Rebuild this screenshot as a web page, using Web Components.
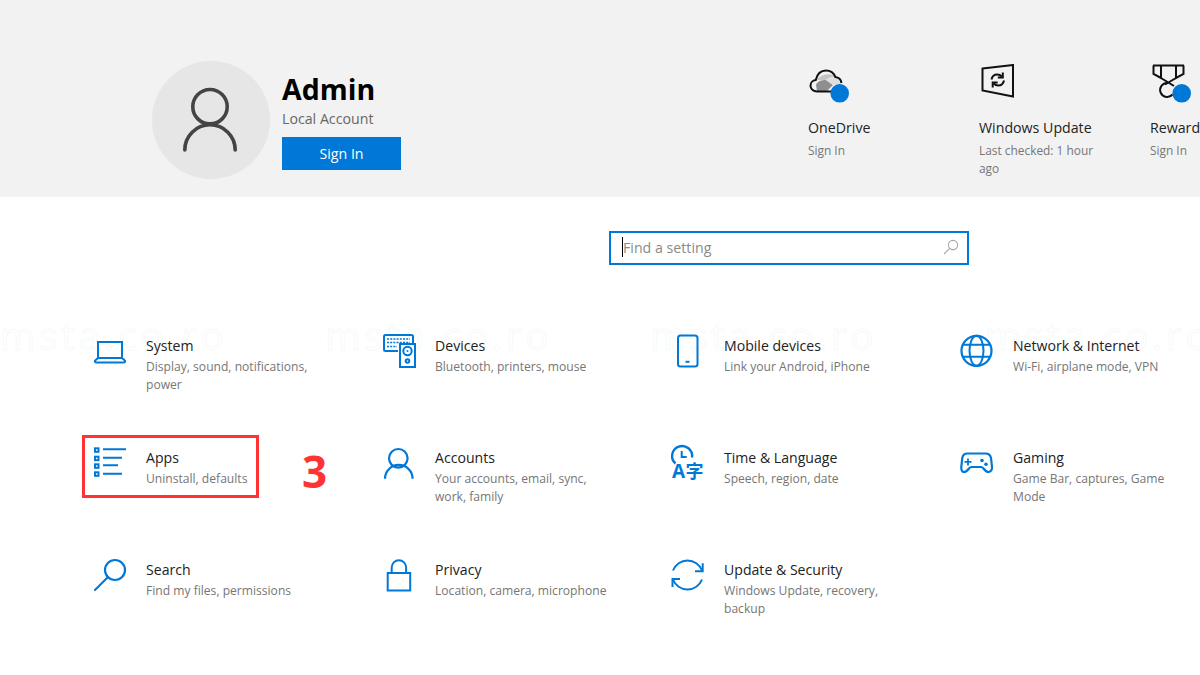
<!DOCTYPE html>
<html lang="en">
<head>
<meta charset="utf-8">
<title>Settings</title>
<style>
  html, body { margin: 0; padding: 0; background: #fff; }
  body { width: 1200px; height: 675px; overflow: hidden; font-family: "Open Sans", "Noto Sans", sans-serif; }
</style>
</head>
<body>
<settings-home>
  <account-header slot="header">
    <user-card name="Admin" kind="Local Account" action="Sign In"></user-card>
    <status-item title="OneDrive" detail="Sign In" icon="onedrive"></status-item>
    <status-item title="Windows Update" detail="Last checked: 1 hour ago" icon="update"></status-item>
    <status-item title="Rewards" detail="Sign In" icon="rewards"></status-item>
  </account-header>
  <search-box slot="search" placeholder="Find a setting"></search-box>
  <setting-tile icon="system" title="System" detail="Display, sound, notifications, power"></setting-tile>
  <setting-tile icon="devices" title="Devices" detail="Bluetooth, printers, mouse"></setting-tile>
  <setting-tile icon="mobile" title="Mobile devices" detail="Link your Android, iPhone"></setting-tile>
  <setting-tile icon="network" title="Network &amp; Internet" detail="Wi-Fi, airplane mode, VPN"></setting-tile>
  <setting-tile icon="apps" title="Apps" detail="Uninstall, defaults" marked></setting-tile>
  <setting-tile icon="accounts" title="Accounts" detail="Your accounts, email, sync, work, family"></setting-tile>
  <setting-tile icon="time" title="Time &amp; Language" detail="Speech, region, date"></setting-tile>
  <setting-tile icon="gaming" title="Gaming" detail="Game Bar, captures, Game Mode"></setting-tile>
  <setting-tile icon="search" title="Search" detail="Find my files, permissions"></setting-tile>
  <setting-tile icon="privacy" title="Privacy" detail="Location, camera, microphone"></setting-tile>
  <setting-tile icon="security" title="Update &amp; Security" detail="Windows Update, recovery, backup"></setting-tile>
</settings-home>

<script>
const ICONS = {
  onedrive: `
    <path d="M9 16c3-6 15-8 18-3-5 0-7 1-9 3z" fill="#c4c4c4"/>
    <path d="M8 21c1-4 6-5 10-5l7 5-6 6H9z" fill="#8f8f8f"/>
    <path d="M18 16c3-2 8-3 11-2l4 6-8 1z" fill="#dedede"/>
    <path d="M24 27.500H9c-3.800 0-6.500-2.600-6.500-5.800 0-3 2.200-5.300 5.200-5.600C9.200 9.800 13 6.500 18 6.500c4.400 0 7.800 2.500 9.300 6.500 3.200.3 5.700 2.900 6.200 6" fill="none" stroke="#111" stroke-width="2"/>
    <circle cx="31.700" cy="29.300" r="9.300" fill="#0078d7"/>`,
  update: `
    <path d="M3.500 4.600 34 1v31.500L3.500 26.400z" fill="none" stroke="#111" stroke-width="2"/>
    <path d="M12.500 15.500c.6-3 3-5 5.800-5 1.800 0 3.300.7 4.500 2M25 16.500c-.6 3-3 5-5.800 5-1.800 0-3.300-.7-4.500-2" fill="none" stroke="#111" stroke-width="2"/>
    <path d="M23.800 8.500v5h-5M13.700 23.500v-5h5" fill="none" stroke="#111" stroke-width="2"/>`,
  rewards: `
    <path d="M3 1.500H34M3.500 1.500V10L11 14V1.500M33.500 1.500V10L26 14V1.500M11 14 24 22M26 14 15 20.500" fill="none" stroke="#111" stroke-width="2"/>
    <path d="M22.500 30.500A7 7 0 1 1 17 19" fill="none" stroke="#111" stroke-width="2"/>
    <circle cx="31.700" cy="29.300" r="9.300" fill="#0078d7"/>`,
  system: `
    <path d="M4 23.500V8h24v15.500" fill="none"/>
    <path d="M4 24 1.200 26.500c-.7.700-.3 2 .8 2h28c1.100 0 1.500-1.300.8-2L28 24z" fill="none"/>`,
  devices: `
    <path d="M15 17H2.500A1.500 1.500 0 0 1 1 15.500V2.500A1.500 1.500 0 0 1 2.500 1h26A1.500 1.500 0 0 1 30 2.500V9" fill="none"/>
    <path d="M4 5h23M4 8.500h23" fill="none" stroke-dasharray="2 1.200" stroke-width="1.600"/>
    <path d="M4 12.500h10" fill="none" stroke-dasharray="2 1.200" stroke-width="1.600"/>
    <rect x="17" y="10" width="15" height="23" fill="#fff"/>
    <circle cx="24.500" cy="17" r="4.200" fill="none"/>
    <circle cx="24.500" cy="17" r="1" fill="#0078d7" stroke="none"/>
    <circle cx="24.500" cy="27" r="1.800" fill="none"/>`,
  mobile: `
    <rect x="6" y="1.500" width="19.500" height="31" rx="2.500" fill="none"/>
    <path d="M13.500 27.800h4" fill="none"/>`,
  network: `
    <circle cx="15.500" cy="16.800" r="15" fill="none" stroke-width="2.200"/>
    <ellipse cx="15.500" cy="16.800" rx="7" ry="15" fill="none"/>
    <path d="M2 10.800h27M2 22.800h27" fill="none"/>`,
  apps: `
    <g fill="#0078d7" stroke="none">
      <rect x="0" y="1.300" width="5.500" height="5.500"/><rect x="0" y="9.700" width="5.500" height="5.500"/>
      <rect x="0" y="17.300" width="5.500" height="5.500"/><rect x="0" y="25.300" width="5.500" height="5.500"/>
    </g>
    <g fill="#fff" stroke="none">
      <rect x="2" y="3.300" width="1.500" height="1.500"/><rect x="2" y="11.700" width="1.500" height="1.500"/>
      <rect x="2" y="19.300" width="1.500" height="1.500"/><rect x="2" y="27.300" width="1.500" height="1.500"/>
    </g>
    <path d="M9 3.300H32M9 11.700H28M9 19.300H24M9 27.700H28" fill="none"/>`,
  accounts: `
    <circle cx="15.300" cy="12.300" r="9.300" fill="none" stroke-width="2.200"/>
    <path d="M2 32.700a13.800 13.800 0 0 1 27.600 0" fill="none" stroke-width="2.200"/>`,
  time: `
    <path d="M3.500 17.500a10 10 0 1 1 16.500-6" fill="none" stroke-width="2.400"/>
    <path d="M9.700 5v6h5" fill="none" stroke-width="2"/>
    <text x="0" y="32" font-family="Open Sans, sans-serif" font-weight="700" font-size="19" fill="#0078d7" stroke="none">A</text>
    <text x="13.500" y="31.500" font-family="Noto Sans CJK SC, sans-serif" font-weight="700" font-size="18" fill="#0078d7" stroke="none">字</text>`,
  gaming: `
    <path d="M6.500 7.500h18c3 0 5 1.800 5.500 4.500l1 9c.3 2.500-1 5-3.500 5-2 0-3.500-1.500-5-3.500-.7-.9-1.500-1.500-2.500-1.500h-9.500c-1 0-1.800.6-2.500 1.500C6.500 24.500 5 26 3 26c-2 0-3-2.500-2.700-5l1-9c.5-2.700 2-4.500 5-4.500z" fill="none" stroke-width="2.200"/>
    <path d="M3.500 15.800h7M7 12.500v7" fill="none" stroke-width="1.800"/>
    <circle cx="21" cy="14.500" r="1.800" fill="#0078d7" stroke="none"/>
    <circle cx="25" cy="18.200" r="1.800" fill="#0078d7" stroke="none"/>`,
  search: `
    <circle cx="21" cy="12" r="10" fill="none" stroke-width="2.200"/>
    <path d="M13.500 19.500 1 32" fill="none" stroke-width="2.200" stroke-linecap="round"/>`,
  privacy: `
    <rect x="4.700" y="15" width="22.500" height="17.500" fill="none"/>
    <path d="M8.700 15V9.500a7.200 7.200 0 0 1 14.400 0V15" fill="none"/>`,
  security: `
    <path d="M1 12.500a15.500 15.500 0 0 1 29 0M30 21.500a15.500 15.500 0 0 1-29 0" fill="none"/>
    <path d="M23 13.200H30.700V5.200M8 21H.500V29" fill="none"/>`,
};

class SettingsHome extends HTMLElement {
  constructor() {
    super();
    this.shadowDOM = this.attachShadow({ mode: 'open' });
    this.shadowDOM.innerHTML = `
    <style>
    :host {
      display: block;
      position: relative;
      width: 1200px;
      height: 675px;
      overflow: hidden;
      background: #ffffff;
    }
    .search_row {
      display: flex;
      padding: 34px 0 0 609px;
    }
    .tiles {
      position: relative;
      display: grid;
      grid-template-columns: repeat(4, 289px);
      grid-auto-rows: 112px;
      padding: 69px 0 0 94px;
    }
    .watermark {
      position: absolute;
      top: 311px;
      left: 0;
      display: grid;
      grid-template-columns: 325px 325px 335px 215px;
      width: 1200px;
      font-size: 38px;
      line-height: 48px;
      letter-spacing: 4px;
      white-space: nowrap;
      color: transparent;
      -webkit-text-stroke: 1px #f6fafa;
      pointer-events: none;
    }
    .watermark span::before { content: "msta.co.ro"; }
    </style>
    <div class="watermark" aria-hidden="true"><span></span><span></span><span></span><span></span></div>
    <slot name="header"></slot>
    <div class="search_row"><slot name="search"></slot></div>
    <div class="tiles"><slot></slot></div>
    `;
  }
}

class AccountHeader extends HTMLElement {
  constructor() {
    super();
    this.shadowDOM = this.attachShadow({ mode: 'open' });
    this.shadowDOM.innerHTML = `
    <style>
    :host {
      display: flex;
      align-items: flex-start;
      height: 197px;
      padding-left: 152px;
      box-sizing: border-box;
      background: #f2f2f2;
      overflow: hidden;
    }
    </style>
    <slot></slot>
    `;
  }
}

class UserCard extends HTMLElement {
  constructor() {
    super();
    this.shadowDOM = this.attachShadow({ mode: 'open' });
    this.shadowDOM.innerHTML = `
    <style>
    :host {
      display: flex;
      gap: 12px;
      width: 656px;
      padding-top: 61px;
      flex: none;
    }
    .avatar {
      width: 118px;
      height: 118px;
      border-radius: 50%;
      background: #e6e6e6;
      display: flex;
      align-items: center;
      justify-content: center;
    }
    .name {
      font-weight: 700;
      font-size: 28.5px;
      line-height: 38px;
      color: #000000;
      margin-top: 9px;
    }
    .kind {
      font-size: 14.2px;
      line-height: 20px;
      color: #666666;
      margin-top: 1px;
    }
    button {
      display: block;
      width: 119px;
      height: 33px;
      margin-top: 8px;
      border: 0;
      padding: 0;
      background: #0078d7;
      color: #ffffff;
      font: 14.2px "Open Sans", sans-serif;
    }
    </style>
    <div class="avatar">
      <svg width="60" height="66" viewBox="0 0 60 66">
        <circle cx="29" cy="19.700" r="17.200" fill="none" stroke="#444" stroke-width="3.600"/>
        <path d="M3.800 63a25.200 25.200 0 0 1 50.400 0" fill="none" stroke="#444" stroke-width="3.600" stroke-linecap="round"/>
      </svg>
    </div>
    <div>
      <div class="name">${this.getAttribute('name')}</div>
      <div class="kind">${this.getAttribute('kind')}</div>
      <button>${this.getAttribute('action')}</button>
    </div>
    `;
  }
}

class StatusItem extends HTMLElement {
  constructor() {
    super();
    this.shadowDOM = this.attachShadow({ mode: 'open' });
    this.shadowDOM.innerHTML = `
    <style>
    :host {
      display: block;
      flex: none;
      width: 171px;
      padding-top: 64px;
      box-sizing: border-box;
    }
    svg { display: block; }
    .title {
      font-size: 14.2px;
      line-height: 20px;
      color: #222222;
      margin-top: 14px;
      white-space: nowrap;
    }
    .detail {
      font-size: 11.9px;
      line-height: 18px;
      color: #767676;
      margin-top: 3px;
      width: 125px;
    }
    </style>
    <svg width="42" height="40" viewBox="0 0 42 40">${ICONS[this.getAttribute('icon')]}</svg>
    <div class="title">${this.getAttribute('title')}</div>
    <div class="detail">${this.getAttribute('detail')}</div>
    `;
  }
}

class SearchBox extends HTMLElement {
  constructor() {
    super();
    this.shadowDOM = this.attachShadow({ mode: 'open' });
    this.shadowDOM.innerHTML = `
    <style>
    :host {
      display: flex;
      align-items: center;
      width: 360px;
      height: 34px;
      box-sizing: border-box;
      border: 2px solid #0078d7;
      padding: 0 8px 2px 11px;
      background: #ffffff;
    }
    .caret {
      width: 1px;
      height: 20px;
      background: #000000;
      flex: none;
    }
    .hint {
      flex: 1;
      font-size: 14.2px;
      color: #8a8a8a;
    }
    </style>
    <span class="caret"></span>
    <span class="hint">${this.getAttribute('placeholder')}</span>
    <svg width="16" height="16" viewBox="0 0 16 16">
      <circle cx="10" cy="6" r="4.600" fill="none" stroke="#a6a6a6" stroke-width="1.100"/>
      <path d="M6.700 9.300 1 15" fill="none" stroke="#a6a6a6" stroke-width="1.100"/>
    </svg>
    `;
  }
}

class SettingTile extends HTMLElement {
  constructor() {
    super();
    this.shadowDOM = this.attachShadow({ mode: 'open' });
    const mark = this.hasAttribute('marked') ? `
      <span class="frame"></span>
      <span class="number">3</span>` : '';
    this.shadowDOM.innerHTML = `
    <style>
    :host {
      display: flex;
      position: relative;
      gap: 18px;
    }
    svg {
      display: block;
      flex: none;
      overflow: visible;
      stroke: #0078d7;
      stroke-width: 2;
    }
    .title {
      font-size: 14.1px;
      line-height: 20px;
      color: #222222;
      margin-top: 2px;
    }
    .detail {
      font-size: 12.1px;
      line-height: 18px;
      color: #767676;
      margin-top: 2px;
      width: 178px;
    }
    .frame {
      position: absolute;
      left: -12px;
      top: -11px;
      width: 177px;
      height: 63px;
      box-sizing: border-box;
      border: 3px solid #ff3333;
    }
    .number {
      position: absolute;
      left: 208px;
      top: 0;
      font-size: 44px;
      font-weight: 700;
      line-height: 50px;
      color: #ff3333;
    }
    </style>
    <svg width="34" height="34" viewBox="0 0 34 34">${ICONS[this.getAttribute('icon')]}</svg>
    <div>
      <div class="title">${this.getAttribute('title')}</div>
      <div class="detail">${this.getAttribute('detail')}</div>
    </div>
    ${mark}
    `;
  }
}

customElements.define('settings-home', SettingsHome);
customElements.define('account-header', AccountHeader);
customElements.define('user-card', UserCard);
customElements.define('status-item', StatusItem);
customElements.define('search-box', SearchBox);
customElements.define('setting-tile', SettingTile);
</script>
</body>
</html>
